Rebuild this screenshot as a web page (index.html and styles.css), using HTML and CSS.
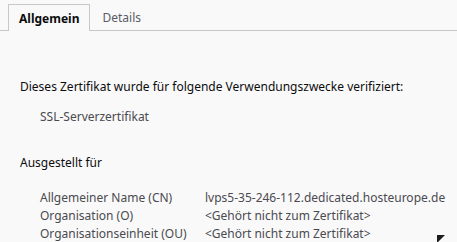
FILE: index.html
```html
<!DOCTYPE html>
<html lang="de">
<head>
    <meta charset="UTF-8">
    <title>Zertifikat</title>
    <link rel="stylesheet" href="styles.css">
</head>
<body>
    <div class="tabs">
        <div class="tab active">Allgemein</div>
        <div class="tab">Details</div>
    </div>

    <div class="content">
        <p class="heading">Dieses Zertifikat wurde für folgende Verwendungszwecke verifiziert:</p>
        <p class="usage">SSL-Serverzertifikat</p>

        <p class="heading section">Ausgestellt für</p>
        <div class="fields">
            <div class="label">Allgemeiner Name (CN)</div>
            <div class="value">lvps5-35-246-112.dedicated.hosteurope.de</div>
            <div class="label">Organisation (O)</div>
            <div class="value">&lt;Gehört nicht zum Zertifikat&gt;</div>
            <div class="label">Organisationseinheit (OU)</div>
            <div class="value">&lt;Gehört nicht zum Zertifikat&gt;</div>
        </div>
    </div>

    <div class="cursor"></div>
</body>
</html>
```

FILE: styles.css
```css
* {
    margin: 0;
    padding: 0;
    box-sizing: border-box;
}

body {
    font-family: "Noto Sans", "Open Sans", sans-serif;
    font-size: 12px;
    background-color: #f9f9fa;
    color: #0c0c0d;
    width: 457px;
    height: 242px;
    overflow: hidden;
    position: relative;
}

.tabs {
    display: flex;
    padding: 4px 0 0 8px;
    border-bottom: 1px solid #c8c8c8;
    height: 31px;
}

.tab {
    padding: 5px 11px 0 12px;
    color: #5b5b66;
    height: 26px;
}

.tab.active {
    font-weight: bold;
    color: #0c0c0d;
    border: 1px solid #c8c8c8;
    border-bottom: none;
    background-color: #f9f9fa;
    margin-bottom: -1px;
    height: 27px;
    padding: 5px 10px 0 10px;
}

.content {
    padding: 47px 20px 0 20px;
}

.heading {
    line-height: 18px;
    white-space: nowrap;
}

.usage {
    color: #4a4a4f;
    padding: 12px 0 0 20px;
    line-height: 18px;
}

.section {
    margin-top: 28px;
}

.fields {
    display: grid;
    grid-template-columns: 165px auto;
    padding: 17px 0 0 20px;
    line-height: 18px;
    color: #4a4a4f;
    white-space: nowrap;
}

.cursor {
    position: absolute;
    left: 437px;
    top: 235px;
    width: 0;
    height: 0;
    border-left: 8px solid #1c1c1c;
    border-bottom: 8px solid transparent;
}
```
